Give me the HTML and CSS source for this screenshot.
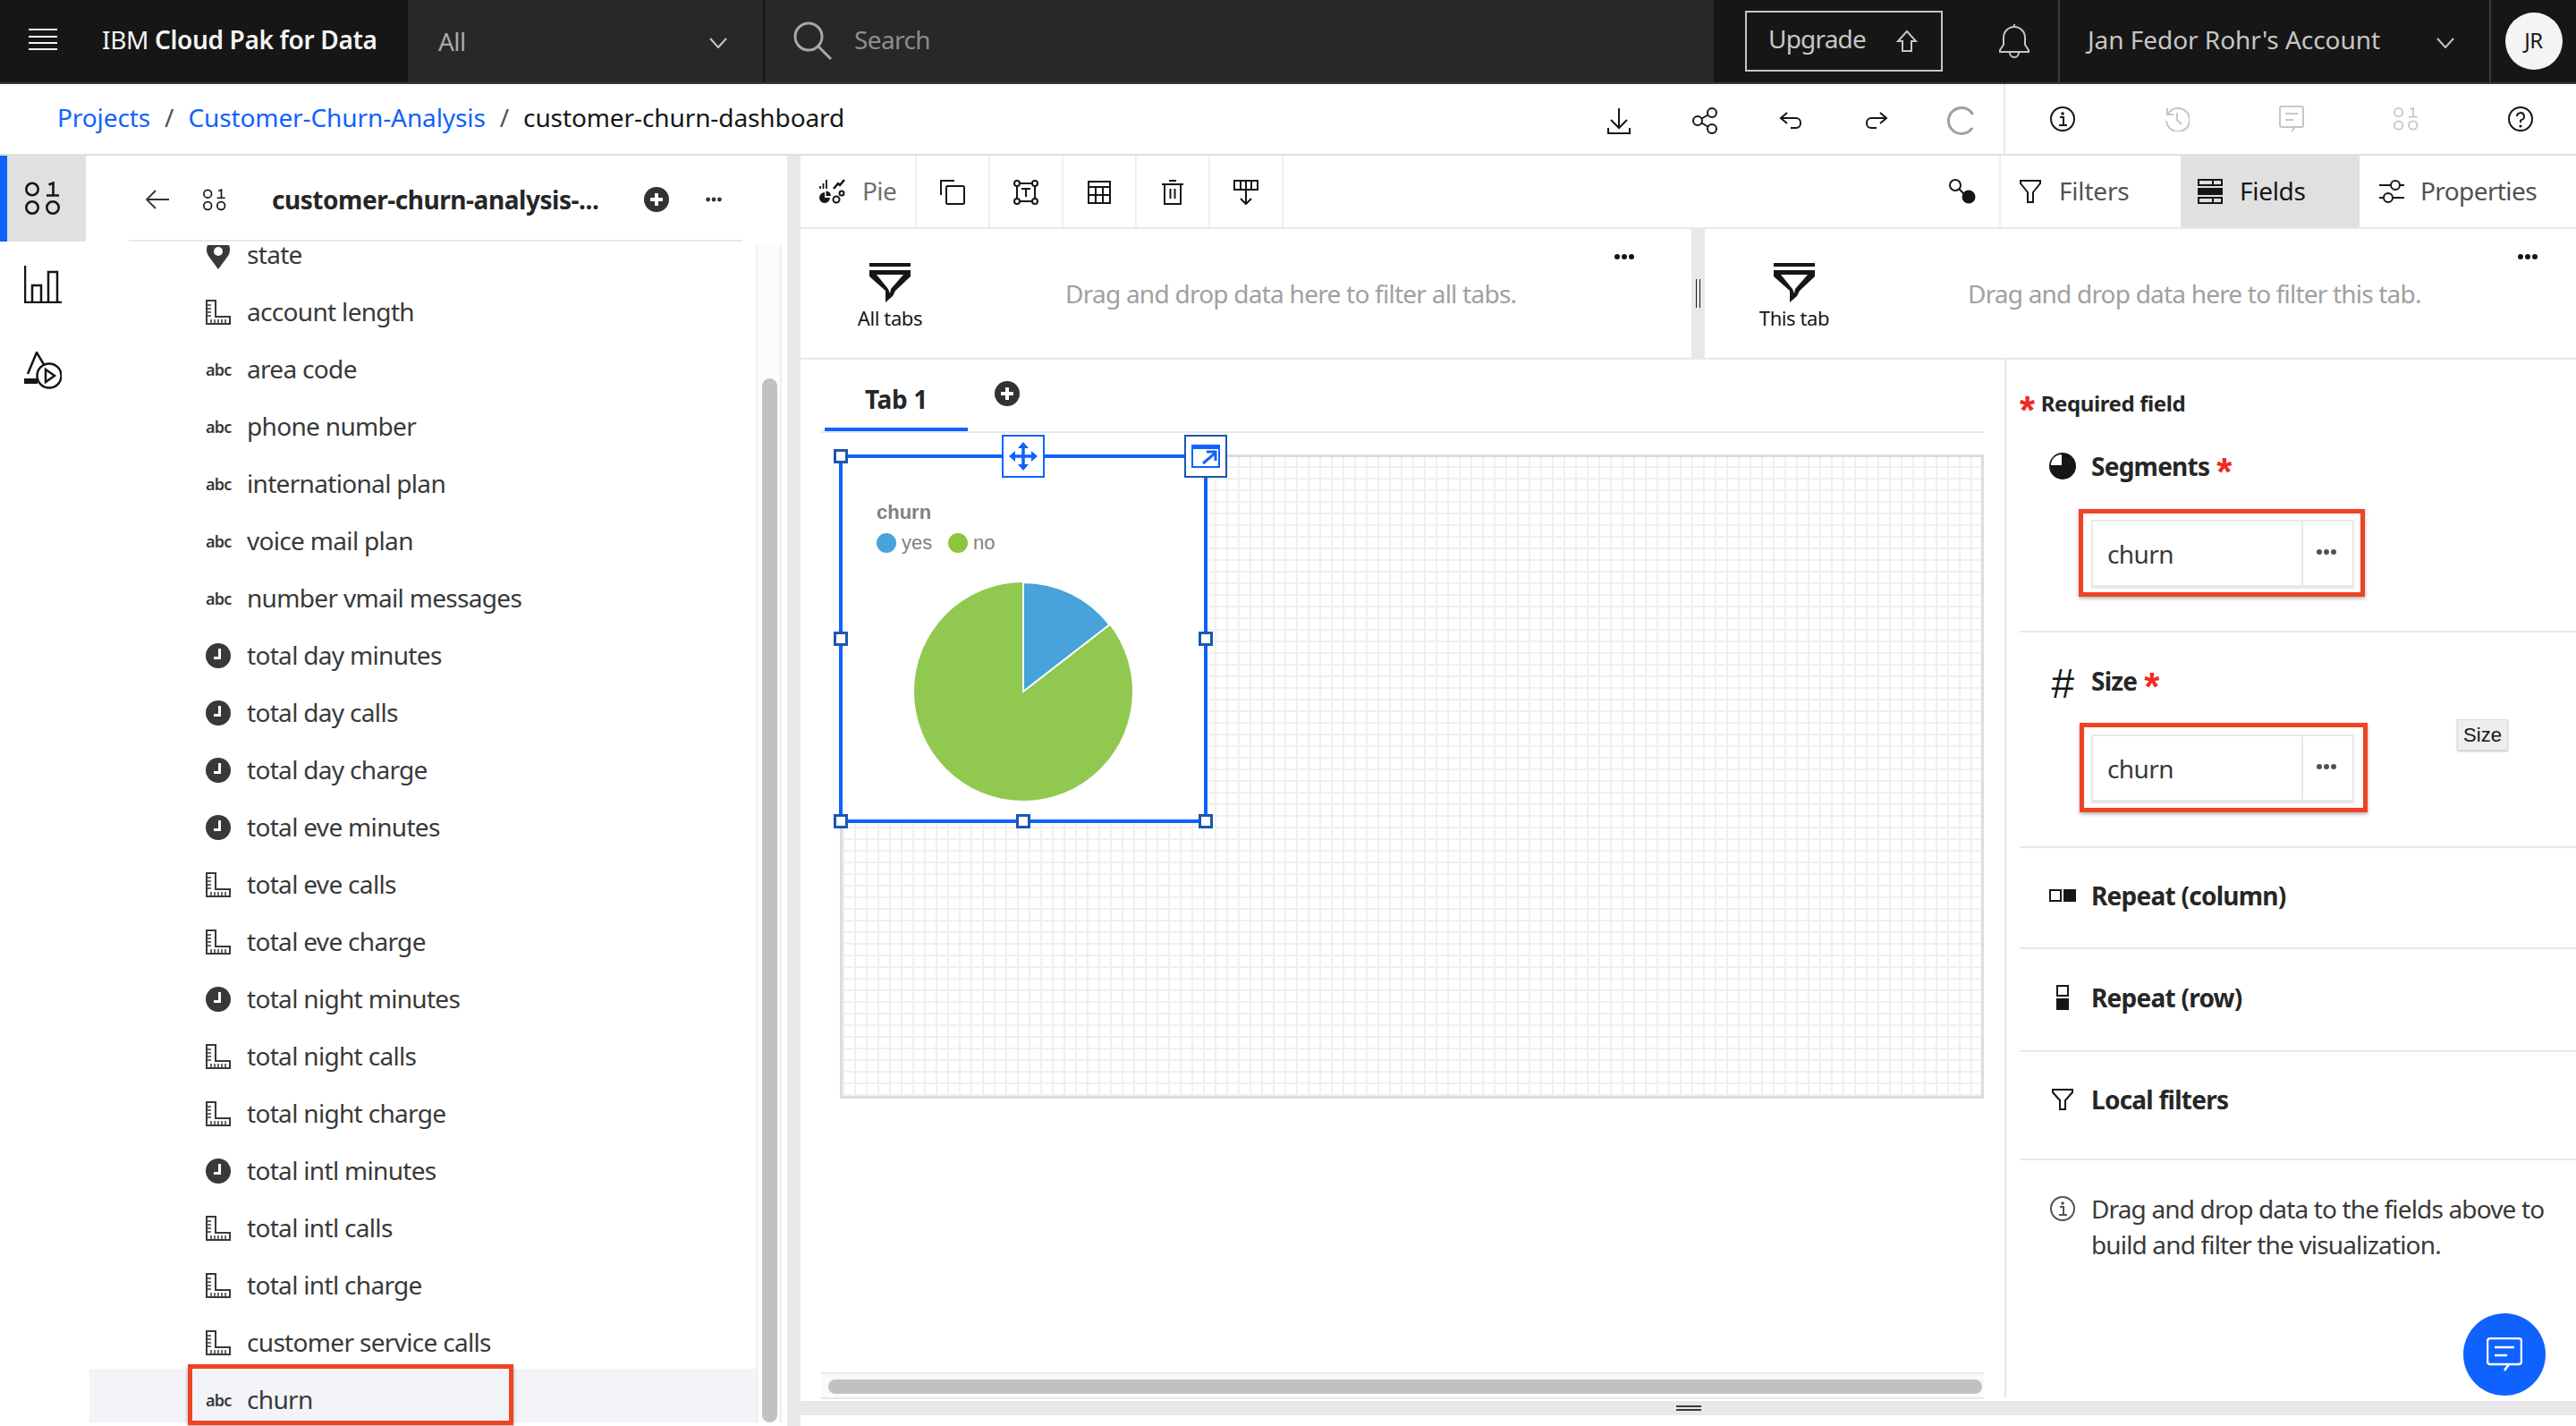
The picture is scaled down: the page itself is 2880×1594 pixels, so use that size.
FILE: index.html
```html
<!DOCTYPE html>
<html lang="en">
<head>
<meta charset="utf-8">
<title>customer-churn-dashboard</title>
<link rel="stylesheet" href="styles.css">
</head>
<body>
<svg class="defs" width="0" height="0">
  <symbol id="i-ruler" viewBox="0 0 28 28"><path d="M1 1H11V19H27V27H1Z" fill="none" stroke="currentColor" stroke-width="2"/><path d="M2 6H6M2 10H6M2 14H6M2 18H6M6 26V22M10 26V22M14 26V22M18 26V22M22 26V22" stroke="currentColor" stroke-width="1.5"/></symbol>
  <symbol id="i-clock" viewBox="0 0 28 28"><circle cx="14" cy="14" r="14" fill="currentColor"/><path d="M15.5 6V16.5H9" fill="none" stroke="#fff" stroke-width="3"/></symbol>
  <symbol id="i-pin" viewBox="0 0 28 32"><path d="M14 32 3 17A13 13 0 1 1 25 17Z" fill="currentColor"/><circle cx="14" cy="12" r="5" fill="#fff"/></symbol>
  <symbol id="i-data" viewBox="0 0 40 38"><g fill="none" stroke="currentColor" stroke-width="2.600"><circle cx="8" cy="8.500" r="6.700"/><circle cx="8" cy="29" r="6.700"/><circle cx="31" cy="29" r="6.700"/><path d="M26.500 3.500 31.500 1.500V15.500M24 15.500H38"/></g></symbol>
  <symbol id="i-plus" viewBox="0 0 28 28"><circle cx="14" cy="14" r="14" fill="#333"/><path d="M14 7V21M7 14H21" stroke="#fff" stroke-width="4"/></symbol>
  <symbol id="i-funnel" viewBox="0 0 46 44"><path d="M0 0H46V4H0Z" fill="#161616"/><path d="M0 8H46V15L29 31 26 37 18 44V31L0 15Z" fill="#161616"/><path d="M8 13H38L24 29 23 34 21 29Z" fill="#fff"/></symbol>
  <symbol id="i-dots" viewBox="0 0 24 8"><circle cx="4" cy="4" r="3" fill="currentColor"/><circle cx="12" cy="4" r="3" fill="currentColor"/><circle cx="20" cy="4" r="3" fill="currentColor"/></symbol>
  <symbol id="i-chev" viewBox="0 0 20 12"><path d="M1 1 10 11 19 1" fill="none" stroke="currentColor" stroke-width="2"/></symbol>
</svg>

<header class="topbar">
  <div class="brand">
    <svg class="burger" width="32" height="24" viewBox="0 0 32 24"><path d="M0 1H32M0 9H32M0 16H32M0 23H32" stroke="#f4f4f4" stroke-width="2"/></svg>
    <span class="brand-name">IBM <b>Cloud Pak for Data</b></span>
  </div>
  <div class="scope"><span>All</span><svg class="chev" width="20" height="12"><use href="#i-chev"/></svg></div>
  <div class="search">
    <svg width="44" height="44" viewBox="0 0 44 44"><circle cx="17" cy="17" r="15" fill="none" stroke="#a8a8a8" stroke-width="3"/><path d="M28 28 42 42" stroke="#a8a8a8" stroke-width="3"/></svg>
    <span>Search</span>
  </div>
  <div class="acct">
    <div class="upgrade"><span>Upgrade</span>
      <svg width="24" height="26" viewBox="0 0 24 26"><path d="M12 2 2 13H7V24H17V13H22Z" fill="none" stroke="#c6c6c6" stroke-width="2"/></svg>
    </div>
    <div class="bell">
      <svg width="36" height="40" viewBox="0 0 36 40"><path d="M18 1V5M2 30 6 24V16A12 12 0 0 1 30 16V24L34 30V32H2ZM13 33A5 5 0 0 0 23 33" fill="none" stroke="#c6c6c6" stroke-width="2"/></svg>
    </div>
    <div class="acct-name"><span>Jan Fedor Rohr's Account</span><svg class="chev" width="20" height="12"><use href="#i-chev"/></svg></div>
    <div class="avatar-cell"><div class="avatar">JR</div></div>
  </div>
</header>

<nav class="crumbs">
  <a class="crumb-link">Projects</a><span class="slash">/</span>
  <a class="crumb-link">Customer-Churn-Analysis</a><span class="slash">/</span>
  <span class="crumb-cur">customer-churn-dashboard</span>
  <div class="actions">
    <div class="act"><svg width="26" height="30" viewBox="0 0 26 30"><path d="M13 1V23M4 14 13 23 22 14M1 23V29H25V23" fill="none" stroke="#161616" stroke-width="2"/></svg></div>
    <div class="act"><svg width="28" height="30" viewBox="0 0 28 30"><g fill="none" stroke="#161616" stroke-width="2"><circle cx="22" cy="6" r="5"/><circle cx="22" cy="24" r="5"/><circle cx="6" cy="15" r="5"/><path d="M10.5 12.5 17.5 8.5M10.5 17.5 17.5 21.5"/></g></svg></div>
    <div class="act"><svg width="26" height="20" viewBox="0 0 26 20"><path d="M9 1 2 7 9 13M2 7H19A5 5 0 0 1 24 12V13A5 5 0 0 1 19 18H13" fill="none" stroke="#161616" stroke-width="2"/></svg></div>
    <div class="act"><svg width="26" height="20" viewBox="0 0 26 20"><path d="M17 1 24 7 17 13M24 7H7A5 5 0 0 0 2 12V13A5 5 0 0 0 7 18H13" fill="none" stroke="#161616" stroke-width="2"/></svg></div>
    <div class="act act-end"><svg width="32" height="32" viewBox="0 0 32 32"><path d="M28.700 9A14.500 14.500 0 1 0 28 24" fill="none" stroke="#a0a0a0" stroke-width="3"/></svg></div>
    <div class="act2"><svg width="28" height="28" viewBox="0 0 28 28"><circle cx="14" cy="14" r="13" fill="none" stroke="#161616" stroke-width="2"/><path d="M11 12H15V21M10 21H19" fill="none" stroke="#161616" stroke-width="2"/><circle cx="14" cy="8" r="1.8" fill="#161616"/></svg></div>
    <div class="act2"><svg width="28" height="28" viewBox="0 0 28 28"><path d="M3 2V9H10M4 8A13 13 0 1 1 2 16M14 7V15L19 20" fill="none" stroke="#c6c6c6" stroke-width="2"/></svg></div>
    <div class="act2"><svg width="28" height="30" viewBox="0 0 28 30"><path d="M16 24H25A2 2 0 0 0 27 22V3A2 2 0 0 0 25 1H3A2 2 0 0 0 1 3V22A2 2 0 0 0 3 24H18L14 29M7 9H21M7 16H16" fill="none" stroke="#c6c6c6" stroke-width="2"/></svg></div>
    <div class="act2 faint"><svg width="28" height="28"><use href="#i-data"/></svg></div>
    <div class="act2"><svg width="28" height="28" viewBox="0 0 28 28"><circle cx="14" cy="14" r="13" fill="none" stroke="#161616" stroke-width="2"/><path d="M10 11A4 4 0 1 1 15 15L14 16V18" fill="none" stroke="#161616" stroke-width="2"/><circle cx="14" cy="22" r="1.6" fill="#161616"/></svg></div>
  </div>
</nav>

<main class="main">
  <aside class="rail">
    <div class="rail-tab on"><svg width="40" height="38"><use href="#i-data"/></svg></div>
    <div class="rail-tab"><svg width="42" height="42" viewBox="0 0 42 42"><path d="M1 0V41H42M9 41V22H19V41M27 41V7H37V41" fill="none" stroke="#161616" stroke-width="2.5"/></svg></div>
    <div class="rail-tab"><svg width="42" height="42" viewBox="0 0 42 42"><path d="M4 25 14 1 23 16" fill="none" stroke="#161616" stroke-width="2.5"/><path d="M0 30H15V36H0Z" fill="#161616"/><circle cx="28" cy="27" r="13.5" fill="#fff" stroke="#161616" stroke-width="2.5"/><path d="M24 20 34 27 24 34Z" fill="none" stroke="#161616" stroke-width="2.5"/></svg></div>
  </aside>

  <section class="data">
    <div class="data-head">
      <svg class="back" width="26" height="22" viewBox="0 0 26 22"><path d="M11 1 1 11 11 21M1 11H26" fill="none" stroke="#333" stroke-width="1.8"/></svg>
      <svg class="head-ico" width="26" height="25"><use href="#i-data"/></svg>
      <span class="data-title">customer-churn-analysis-...</span>
      <svg class="head-plus" width="28" height="28"><use href="#i-plus"/></svg>
      <svg class="head-dots" width="24" height="8"><use href="#i-dots"/></svg>
    </div>
    <div class="list-wrap">
      <ul class="rows">
        <li class="row"><svg width="28" height="32"><use href="#i-pin"/></svg><span>state</span></li>
        <li class="row"><svg width="28" height="28"><use href="#i-ruler"/></svg><span>account length</span></li>
        <li class="row"><i class="abc">abc</i><span>area code</span></li>
        <li class="row"><i class="abc">abc</i><span>phone number</span></li>
        <li class="row"><i class="abc">abc</i><span>international plan</span></li>
        <li class="row"><i class="abc">abc</i><span>voice mail plan</span></li>
        <li class="row"><i class="abc">abc</i><span>number vmail messages</span></li>
        <li class="row"><svg width="28" height="28"><use href="#i-clock"/></svg><span>total day minutes</span></li>
        <li class="row"><svg width="28" height="28"><use href="#i-clock"/></svg><span>total day calls</span></li>
        <li class="row"><svg width="28" height="28"><use href="#i-clock"/></svg><span>total day charge</span></li>
        <li class="row"><svg width="28" height="28"><use href="#i-clock"/></svg><span>total eve minutes</span></li>
        <li class="row"><svg width="28" height="28"><use href="#i-ruler"/></svg><span>total eve calls</span></li>
        <li class="row"><svg width="28" height="28"><use href="#i-ruler"/></svg><span>total eve charge</span></li>
        <li class="row"><svg width="28" height="28"><use href="#i-clock"/></svg><span>total night minutes</span></li>
        <li class="row"><svg width="28" height="28"><use href="#i-ruler"/></svg><span>total night calls</span></li>
        <li class="row"><svg width="28" height="28"><use href="#i-ruler"/></svg><span>total night charge</span></li>
        <li class="row"><svg width="28" height="28"><use href="#i-clock"/></svg><span>total intl minutes</span></li>
        <li class="row"><svg width="28" height="28"><use href="#i-ruler"/></svg><span>total intl calls</span></li>
        <li class="row"><svg width="28" height="28"><use href="#i-ruler"/></svg><span>total intl charge</span></li>
        <li class="row"><svg width="28" height="28"><use href="#i-ruler"/></svg><span>customer service calls</span></li>
        <li class="row sel"><i class="abc">abc</i><span>churn</span></li>
      </ul>
      <div class="vbar"><div class="vthumb"></div></div>
    </div>
    <div class="red-box red-churn"></div>
  </section>

  <div class="gutter"></div>

  <section class="work">
    <div class="toolbar">
      <div class="tool-pie">
        <svg width="30" height="28" viewBox="0 0 30 28"><path d="M1 8V11M4.500 5V11M8 1V11" stroke="#161616" stroke-width="1.800"/><path d="M16 11 21 5 23 7 28 1" fill="none" stroke="#161616" stroke-width="2.500"/><path d="M6 15A6 6 0 1 0 12 21H6Z" fill="#161616"/><path d="M7.500 13.500A6 6 0 0 1 13 19H7.500Z" fill="#161616"/><circle cx="19" cy="23" r="3.500" fill="none" stroke="#161616" stroke-width="2"/><circle cx="25" cy="16" r="2.500" fill="none" stroke="#161616" stroke-width="2"/></svg>
        <span>Pie</span>
      </div>
      <div class="tool"><svg width="28" height="28" viewBox="0 0 28 28"><path d="M1 17V1H16" fill="none" stroke="#161616" stroke-width="2"/><rect x="7" y="7" width="20" height="20" rx="1.500" fill="none" stroke="#161616" stroke-width="2"/></svg></div>
      <div class="tool"><svg width="28" height="28" viewBox="0 0 28 28"><g fill="none" stroke="#161616" stroke-width="2"><path d="M7 4H21M7 24H21M4 7V21M24 7V21"/><circle cx="4" cy="4" r="3"/><circle cx="24" cy="4" r="3"/><circle cx="4" cy="24" r="3"/><circle cx="24" cy="24" r="3"/><path d="M9 10H19M14 10V19"/></g></svg></div>
      <div class="tool"><svg width="26" height="26" viewBox="0 0 26 26"><path d="M1 1H25V25H1ZM1 7H25M1 16H25M9 7V25M17 7V25" fill="none" stroke="#161616" stroke-width="2"/></svg></div>
      <div class="tool"><svg width="24" height="28" viewBox="0 0 24 28"><path d="M0 5H24M8 1H16M3 5V27H21V5M9.500 10V21M14.500 10V21" fill="none" stroke="#161616" stroke-width="2"/></svg></div>
      <div class="tool"><svg width="28" height="28" viewBox="0 0 28 28"><path d="M1 1H27V11H1ZM8 1V11M14 1V11M20 1V11M14 11V27M8 21 14 27 20 21" fill="none" stroke="#161616" stroke-width="2"/></svg></div>
      <div class="tool-node"><svg width="30" height="28" viewBox="0 0 30 28"><circle cx="7" cy="7" r="6" fill="none" stroke="#161616" stroke-width="2"/><path d="M11 11 17 17" stroke="#161616" stroke-width="2"/><circle cx="22" cy="20" r="7.500" fill="#161616"/></svg></div>
      <div class="vtab vtab-filters"><svg width="24" height="26" viewBox="0 0 24 26"><path d="M1 1H23V4L15 14V25H9V14L1 4Z" fill="none" stroke="#161616" stroke-width="2"/></svg><span>Filters</span></div>
      <div class="vtab vtab-fields"><svg width="28" height="28" viewBox="0 0 28 28"><path d="M1 1H27V7H1ZM1 21H27V27H1ZM17 1V7M17 21V27" fill="none" stroke="#161616" stroke-width="2"/><path d="M0 10H28V18H0Z" fill="#161616"/></svg><span>Fields</span></div>
      <div class="vtab vtab-props"><svg width="28" height="28" viewBox="0 0 28 28"><g fill="none" stroke="#161616" stroke-width="2"><path d="M0 7H13M23 7H28M0 21H5M15 21H28"/><circle cx="18" cy="7" r="5"/><circle cx="10" cy="21" r="5"/></g></svg><span>Properties</span></div>
    </div>

    <div class="filters">
      <div class="zone zone-a">
        <div class="zone-label"><svg width="46" height="44"><use href="#i-funnel"/></svg><span>All tabs</span></div>
        <span class="zone-hint hint-a">Drag and drop data here to filter all tabs.</span>
        <svg class="zone-dots dots-a" width="24" height="8"><use href="#i-dots"/></svg>
      </div>
      <div class="zone-grip"><i></i></div>
      <div class="zone zone-b">
        <div class="zone-label"><svg width="46" height="44"><use href="#i-funnel"/></svg><span>This tab</span></div>
        <span class="zone-hint hint-b">Drag and drop data here to filter this tab.</span>
        <svg class="zone-dots dots-b" width="24" height="8"><use href="#i-dots"/></svg>
      </div>
    </div>

    <div class="body">
      <div class="stage">
        <div class="tabs">
          <div class="tab">Tab 1</div>
          <svg class="tab-plus" width="28" height="28"><use href="#i-plus"/></svg>
        </div>
        <div class="canvas">
          <div class="widget">
            <div class="lg-title">churn</div>
            <div class="lg-row"><i class="dot dot-yes"></i><span class="lg-a">yes</span><i class="dot dot-no"></i><span>no</span></div>
            <svg class="pie" width="248" height="248" viewBox="0 0 248 248"><circle cx="124" cy="124" r="122" fill="#91c950"/><path d="M124 124V2A122 122 0 0 1 220.400 49.200Z" fill="#47a3d9" stroke="#fff" stroke-width="2"/></svg>
            <i class="hd hd-tl"></i><i class="hd hd-tr"></i><i class="hd hd-ml"></i><i class="hd hd-mr"></i><i class="hd hd-bl"></i><i class="hd hd-bm"></i><i class="hd hd-br"></i>
            <div class="grab grab-move"><svg width="32" height="32" viewBox="0 0 32 32"><path d="M16 3V29M3 16H29" stroke="#0f62fe" stroke-width="3.500"/><path d="M16 0 22 7H10ZM16 32 22 25H10ZM0 16 7 10V22ZM32 16 25 10V22Z" fill="#0f62fe"/></svg></div>
            <div class="grab grab-exp"><svg width="32" height="26" viewBox="0 0 32 26"><path d="M0 0H32V5H0Z" fill="#0f62fe"/><path d="M1 1H31V25H1Z" fill="none" stroke="#0f62fe" stroke-width="2"/><path d="M13 21 27 9M17 8H27V18" fill="none" stroke="#0f62fe" stroke-width="3"/></svg></div>
          </div>
        </div>
        <div class="hbar"><div class="hthumb"></div></div>
      </div>

      <aside class="fields">
        <div class="req"><b class="star">*</b><b>Required field</b></div>

        <div class="sec sec-seg">
          <div class="lab"><span class="lab-ico"><svg width="30" height="30" viewBox="0 0 30 30"><circle cx="15" cy="15" r="14" fill="#161616" stroke="#161616" stroke-width="2"/><path d="M14 2V14H2A12 12 0 0 1 14 2Z" fill="#fff"/></svg></span><b>Segments</b><b class="star star-lab">*</b></div>
          <div class="chip"><span class="chip-name">churn</span><span class="chip-more"><svg width="24" height="8"><use href="#i-dots"/></svg></span><div class="red-box red-a"></div></div>
        </div>

        <div class="sec sec-size">
          <div class="lab"><span class="lab-ico lab-hash">#</span><b>Size</b><b class="star star-lab">*</b></div>
          <div class="chip"><span class="chip-name">churn</span><span class="chip-more"><svg width="24" height="8"><use href="#i-dots"/></svg></span><div class="red-box red-b"></div></div>
        </div>

        <div class="sec sec-col">
          <div class="lab"><span class="lab-ico"><svg width="30" height="14" viewBox="0 0 30 14"><path d="M1 1H13V13H1Z" fill="none" stroke="#161616" stroke-width="2"/><path d="M16 0H30V14H16Z" fill="#161616"/></svg></span><b>Repeat (column)</b></div>
        </div>
        <div class="sec sec-row">
          <div class="lab"><span class="lab-ico"><svg width="14" height="28" viewBox="0 0 14 28"><path d="M1 1H13V12H1Z" fill="none" stroke="#161616" stroke-width="2"/><path d="M0 15H14V28H0Z" fill="#161616"/></svg></span><b>Repeat (row)</b></div>
        </div>
        <div class="sec sec-local">
          <div class="lab"><span class="lab-ico"><svg width="24" height="24" viewBox="0 0 24 24"><path d="M1 1H23V4L15 13V23H9V13L1 4Z" fill="none" stroke="#161616" stroke-width="2"/></svg></span><b>Local filters</b></div>
        </div>

        <div class="hint">
          <span class="lab-ico"><svg width="28" height="28" viewBox="0 0 28 28"><circle cx="14" cy="14" r="13" fill="none" stroke="#525252" stroke-width="2"/><path d="M11 12H15V21M10 21H19" fill="none" stroke="#525252" stroke-width="2"/><circle cx="14" cy="8" r="1.800" fill="#525252"/></svg></span>
          <p>Drag and drop data to the fields above to build and filter the visualization.</p>
        </div>

        <div class="tip">Size</div>
        <div class="chat"><svg width="40" height="38" viewBox="0 0 40 38"><path d="M22 30H36A3 3 0 0 0 39 27V4A3 3 0 0 0 36 1H4A3 3 0 0 0 1 4V27A3 3 0 0 0 4 30H25L20 37M9 11H31M9 20H23" fill="none" stroke="#fff" stroke-width="2.500"/></svg></div>
      </aside>
    </div>
    <div class="hstripe"><i></i></div>
  </section>
</main>
</body>
</html>
```

FILE: styles.css
```css
* { box-sizing: border-box; }
html, body { margin: 0; padding: 0; }
body {
  width: 2880px;
  height: 1594px;
  overflow: hidden;
  background: #fff;
  color: #161616;
  font-family: "Noto Sans", "Liberation Sans", sans-serif;
  font-size: 28px;
  letter-spacing: -0.6px;
}
svg { display: block; flex: none; }
.defs { position: absolute; }
b { font-weight: 700; }
i { font-style: normal; }
ul { list-style: none; margin: 0; padding: 0; }
p { margin: 0; }

/* top bar */
.topbar { display: flex; height: 94px; background: #161616; border-bottom: 2px solid #393939; }
.brand { display: flex; align-items: center; width: 456px; padding: 0 0 4px 32px; color: #f4f4f4; letter-spacing: -0.35px; }
.burger { margin-right: 50px; }
.brand-name b { font-weight: 600; }
.scope { display: flex; align-items: center; justify-content: space-between; width: 399px; padding: 0 40px 0 34px; background: #282828; border-right: 2px solid #161616; color: #a8a8a8; }
.chev { color: #c6c6c6; margin-top: 4px; }
.search { display: flex; align-items: center; gap: 24px; width: 1061px; padding-left: 32px; background: #282828; color: #8d8d8d; }
.search span { margin-bottom: 4px; }
.acct { display: flex; flex: 1; align-items: center; background: #161616; color: #c6c6c6; }
.upgrade { display: flex; align-items: center; justify-content: space-between; width: 221px; height: 68px; margin-left: 35px; padding: 0 26px 0 24px; border: 2px solid #c6c6c6; letter-spacing: -0.8px; }
.upgrade span { margin-bottom: 6px; }
.bell { display: flex; justify-content: center; width: 129px; padding-left: 31px; }
.acct-name { display: flex; align-items: center; justify-content: space-between; width: 484px; height: 92px; padding: 0 39px 0 31px; border-left: 2px solid #393939; border-right: 2px solid #393939; letter-spacing: -0.05px; }
.acct-name span { margin-bottom: 4px; }
.avatar-cell { display: flex; flex: 1; justify-content: center; }
.avatar { width: 64px; height: 64px; border-radius: 50%; background: #f4f4f4; color: #161616; font-size: 24px; line-height: 62px; text-align: center; }

/* breadcrumb */
.crumbs { display: flex; align-items: center; height: 80px; padding-left: 64px; border-bottom: 2px solid #e0e0e0; letter-spacing: -0.1px; }
.crumb-link { color: #0f62fe; margin-bottom: 4px; }
.slash { margin: 0 16px 4px; color: #525252; }
.crumb-cur { color: #161616; margin-bottom: 4px; }
.actions { display: flex; align-items: center; margin-left: auto; margin-right: -2px; height: 78px; }
.act { display: flex; justify-content: center; align-items: center; width: 96px; height: 78px; padding-top: 4px; }
.act-end { border-right: 2px solid #e8e8e8; }
.act2 { display: flex; justify-content: center; width: 128px; }
.faint { color: #c6c6c6; }

/* main */
.main { display: flex; height: 1420px; }
.rail { flex: none; width: 96px; }
.rail-tab { display: flex; align-items: center; justify-content: center; height: 96px; }
.rail-tab.on { background: #e0e0e0; border-left: 8px solid #0f62fe; padding-right: 8px; }
.data { position: relative; flex: none; width: 784px; padding-left: 4px; }
.data-head { display: flex; align-items: center; height: 96px; margin: 0 50px 0 44px; padding-top: 4px; border-bottom: 2px solid #e8e8e8; color: #161616; }
.back { margin-left: 19px; }
.head-ico { margin-left: 38px; }
.data-title { margin-left: 51px; width: 365px; font-weight: 700; letter-spacing: -0.45px; color: #262626; white-space: nowrap; }
.head-plus { margin-left: 51px; }
.head-dots { margin-left: 38px; color: #333; transform: scale(.8); }
.list-wrap { display: flex; height: 1316px; margin-top: 4px; overflow: hidden; }
.rows { flex: none; width: 745px; margin-top: -21px; }
.row { display: flex; align-items: center; gap: 18px; height: 64px; padding-left: 130px; color: #393939; letter-spacing: -0.68px; }
.row span { margin-bottom: 3px; }
.row.sel { height: 67px; margin-top: -3px; padding-top: 3px; background: #f2f4f8; }
.abc { width: 28px; font-size: 18px; font-weight: 600; letter-spacing: -0.8px; color: #393939; text-align: center; }
.vbar { flex: none; width: 29px; height: 1316px; border-left: 2px solid #eee; border-right: 2px solid #eee; background: #fcfcfc; padding-left: 5px; }
.vthumb { width: 17px; height: 1167px; margin-top: 149px; border-radius: 9px; background: #c1c1c1; }
.red-box { position: absolute; border: 5px solid #ee4423; box-shadow: 0 2px 4px rgba(0,0,0,.3); pointer-events: none; }
.red-churn { left: 114px; top: 1351px; width: 364px; height: 68px; }
.gutter { flex: none; width: 15px; background: #e8e8e8; }

/* work area */
.work { display: flex; flex-direction: column; flex: none; width: 1985px; }
.toolbar { display: flex; align-items: stretch; height: 82px; border-bottom: 2px solid #e8e8e8; }
.tool-pie { display: flex; flex: none; align-items: center; gap: 18px; width: 130px; padding-left: 21px; border-right: 2px solid #f0f0f0; color: #6f6f6f; }
.tool-pie span { margin-bottom: 2px; }
.tool { display: flex; flex: none; align-items: center; justify-content: center; width: 82px; border-right: 2px solid #f0f0f0; padding-top: 2px; }
.tool-node { display: flex; align-items: center; margin-left: auto; margin-right: 26px; }
.vtab { display: flex; flex: none; align-items: center; color: #525252; }
.vtab span { margin-bottom: 2px; }
.vtab-filters { width: 203px; padding-left: 21px; gap: 20px; border-left: 2px solid #f0f0f0; letter-spacing: -0.2px; }
.vtab-fields { width: 200px; padding-left: 19px; gap: 19px; background: #e0e0e0; color: #161616; letter-spacing: -0.3px; }
.vtab-props { width: 242px; padding-left: 22px; gap: 18px; }

.filters { display: flex; height: 146px; border-bottom: 2px solid #e8e8e8; }
.zone { display: flex; align-items: flex-start; }
.zone-a { flex: none; width: 996px; }
.zone-b { flex: 1; }
.zone-grip { display: flex; flex: none; justify-content: center; width: 15px; background: #e8e8e8; padding-top: 56px; }
.zone-grip i { width: 5px; height: 32px; border-left: 1.5px solid #161616; border-right: 1.5px solid #161616; }
.zone-label { display: flex; flex: none; flex-direction: column; align-items: center; width: 200px; padding-top: 38px; }
.zone-label span { margin-top: 3px; font-size: 22px; line-height: 28px; letter-spacing: -0.4px; }
.zone-hint { margin-top: 52px; line-height: 40px; color: #a0a0a0; white-space: nowrap; letter-spacing: -0.75px; }
.hint-a { margin-left: 96px; }
.hint-b { margin-left: 94px; letter-spacing: -0.8px; }
.zone-dots { margin-left: auto; margin-top: 27px; color: #161616; }
.dots-a { margin-right: 63px; }
.dots-b { margin-right: 42px; }

.body { display: flex; height: 1160px; }
.stage { flex: none; width: 1346px; }
.tabs { display: flex; align-items: flex-start; height: 82px; margin: 0 23px; border-bottom: 2px solid #e8e8e8; }
.tab { width: 160px; height: 80px; margin-left: 4px; padding-top: 24px; border-bottom: 4px solid #0f62fe; line-height: 40px; font-weight: 700; letter-spacing: -0.3px; color: #262626; text-align: center; }
.tab-plus { margin: 24px 0 0 30px; }
.canvas {
  position: relative;
  width: 1279px;
  height: 720px;
  margin: 24px 0 0 44px;
  border: 3px solid #dcdcdc;
  background-color: #fff;
  background-image: repeating-linear-gradient(90deg, #f0f0f0 0 2px, transparent 2px 13px), repeating-linear-gradient(0deg, #f0f0f0 0 2px, transparent 2px 13px);
}
.widget { position: absolute; left: -4px; top: -3px; width: 412px; height: 412px; padding: 48px 0 0 38px; background: #fff; border: 4px solid #0f62fe; font-family: "Liberation Sans", sans-serif; font-size: 22px; letter-spacing: 0; color: #808080; }
.lg-title { font-weight: 700; line-height: 26px; }
.lg-row { display: flex; align-items: center; height: 26px; margin-top: 8px; }
.dot { width: 22px; height: 22px; border-radius: 50%; margin-right: 6px; }
.dot-yes { background: #47a3d9; }
.dot-no { background: #8cc63f; }
.lg-a { width: 52px; }
.pie { margin: 29px 0 0 40px; }
.hd { position: absolute; width: 16px; height: 16px; background: #fff; border: 3px solid #1c56b0; }
.hd-tl { left: -10px; top: -10px; }
.hd-tr { left: 398px; top: -10px; }
.hd-ml { left: -10px; top: 194px; }
.hd-mr { left: 398px; top: 194px; }
.hd-bl { left: -10px; top: 398px; }
.hd-bm { left: 194px; top: 398px; }
.hd-br { left: 398px; top: 398px; }
.grab { position: absolute; top: -26px; display: flex; align-items: center; justify-content: center; width: 48px; height: 48px; background: #fff; border: 2px solid #0f62fe; }
.grab-move { left: 178px; }
.grab-exp { left: 382px; border-color: #1c56b0; }
.hbar { width: 1300px; height: 30px; margin: 306px 0 0 23px; padding: 6px 2px 0 8px; border-top: 2px solid #e8e8e8; border-bottom: 2px solid #e8e8e8; background: #fafafa; }
.hthumb { height: 16px; border-radius: 8px; background: #c1c1c1; }

/* fields panel */
.fields { position: relative; flex: none; width: 639px; padding-left: 15px; border-left: 2px solid #e8e8e8; color: #262626; }
.req { display: flex; gap: 7px; height: 69px; padding-top: 29px; font-size: 24px; line-height: 40px; letter-spacing: -0.4px; }
.star { padding-top: 13px; color: #ee2a24; font-family: "Liberation Sans", sans-serif; font-size: 44px; line-height: 30px; }
.sec { padding-left: 30px; border-bottom: 2px solid #e8e8e8; }
.sec-seg { padding-top: 30px; padding-bottom: 47px; }
.sec-size { padding-top: 34px; padding-bottom: 48px; }
.sec-col { padding-top: 33px; padding-bottom: 38px; }
.sec-row { padding-top: 34px; padding-bottom: 39px; }
.sec-local { padding-top: 33px; padding-bottom: 46px; }
.lab { display: flex; align-items: center; height: 40px; line-height: 40px; letter-spacing: -0.75px; }
.lab-ico { display: flex; flex: none; align-items: center; justify-content: center; width: 36px; margin-right: 14px; }
.lab-hash { padding-top: 6px; font-size: 46px; font-weight: 400; color: #161616; font-family: "Liberation Sans", sans-serif; }
.star-lab { margin-left: 8px; }
.chip { position: relative; display: flex; width: 294px; height: 77px; margin: 40px 0 0 50px; border: 2px solid #e8e8e8; border-bottom-width: 4px; }
.chip-name { flex: none; width: 235px; padding-left: 16px; line-height: 72px; color: #393939; border-right: 2px solid #e8e8e8; }
.chip-more { display: flex; flex: 1; align-items: center; justify-content: center; color: #525252; padding: 0 3px 4px 0; }
.red-a { left: -16px; top: -14px; width: 320px; height: 98px; }
.red-b { left: -15px; top: -15px; width: 322px; height: 100px; }
.hint { display: flex; align-items: flex-start; padding: 34px 0 0 30px; line-height: 40px; color: #393939; letter-spacing: -0.85px; }
.hint .lab-ico { margin-top: 6px; }
.hint p { flex: none; width: 525px; }
.tip { position: absolute; left: 504px; top: 402px; width: 57px; height: 35px; border: 1px solid #ddd; background: #eee; box-shadow: 0 1px 2px rgba(0,0,0,.25); font-family: "Liberation Sans", sans-serif; font-size: 22px; letter-spacing: 0; line-height: 33px; text-align: center; color: #161616; }
.chat { position: absolute; left: 511px; top: 1066px; display: flex; align-items: center; justify-content: center; width: 92px; height: 92px; border-radius: 50%; background: #0f62fe; }
.hstripe { height: 16px; margin-top: 4px; padding: 5px 0 0 979px; background: #e8e8e8; }
.hstripe i { display: block; width: 28px; height: 6px; border-top: 2px solid #393939; border-bottom: 2px solid #393939; }
```
